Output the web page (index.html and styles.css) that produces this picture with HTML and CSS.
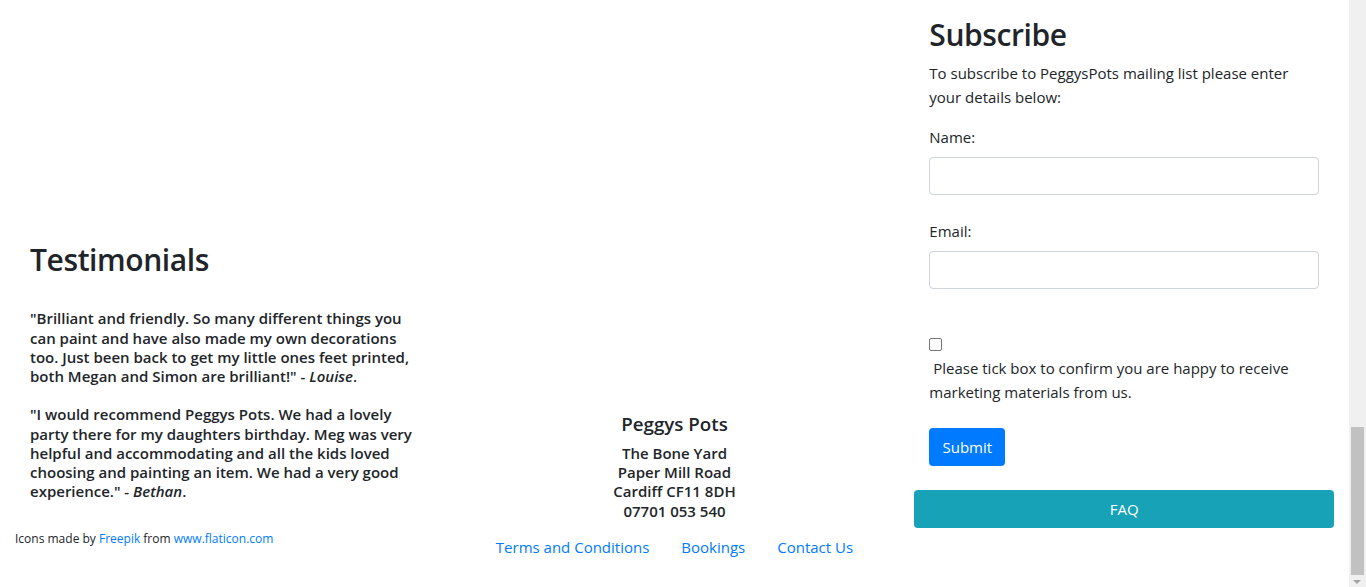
FILE: index.html
```html
<!DOCTYPE html>
<html lang="en">
<head>
<meta charset="utf-8">
<title>Peggys Pots</title>
<link rel="stylesheet" href="styles.css">
</head>
<body>
<div class="viewport">
  <main class="footer-row">
    <section class="col col-testimonials">
      <div class="testimonials">
        <h2 class="heading">Testimonials</h2>
        <h6 class="quote">"Brilliant and friendly. So many different things you can paint and have also made my own decorations too. Just been back to get my little ones feet printed, both Megan and Simon are brilliant!" - <em>Louise</em>.<br><br>"I would recommend Peggys Pots. We had a lovely party there for my daughters birthday. Meg was very helpful and accommodating and all the kids loved choosing and painting an item. We had a very good experience." - <em>Bethan</em>.</h6>
      </div>
      <div class="credits">Icons made by <a href="#">Freepik</a> from <a href="#" class="visited">www.flaticon.com</a></div>
    </section>

    <section class="col col-contact">
      <h5 class="brand">Peggys Pots</h5>
      <h6 class="address">The Bone Yard<br>Paper Mill Road<br>Cardiff CF11 8DH<br>07701 053 540</h6>
      <nav class="links">
        <a href="#">Terms and Conditions</a>
        <a href="#">Bookings</a>
        <a href="#">Contact Us</a>
      </nav>
    </section>

    <section class="col col-subscribe">
      <form class="subscribe">
        <h2 class="heading heading-sub">Subscribe</h2>
        <p class="intro">To subscribe to PeggysPots mailing list please enter your details below:</p>
        <div class="field field-name">
          <label class="label" for="name">Name:</label>
          <input class="control" id="name" type="text">
        </div>
        <div class="field field-email">
          <label class="label" for="email">Email:</label>
          <input class="control" id="email" type="email">
        </div>
        <div class="consent">
          <input class="check" type="checkbox" id="consent"><br>
          <label for="consent" class="consent-text">&nbsp;Please tick box to confirm you are happy to receive marketing materials from us.</label>
        </div>
        <button type="button" class="btn btn-primary">Submit</button>
      </form>
      <a href="#" class="btn btn-info">FAQ</a>
    </section>
  </main>
  <div class="scrollbar">
    <div class="thumb"></div>
    <div class="arrow"></div>
  </div>
</div>
</body>
</html>
```

FILE: styles.css
```css
* {
  box-sizing: border-box;
}

html,
body {
  margin: 0;
  height: 100%;
}

body {
  font-family: "Open Sans", "Noto Sans", sans-serif;
  font-size: 15px;
  line-height: 24px;
  color: #212529;
  background: #fff;
  overflow: hidden;
}

a {
  color: #007bff;
  text-decoration: none;
}

.viewport {
  display: flex;
  height: 587px;
}

.footer-row {
  flex: 1;
  display: grid;
  grid-template-columns: repeat(3, 1fr);
  align-items: start;
}

.col {
  padding: 0 15px;
}

/* Headings */
.heading {
  font-size: 30px;
  line-height: 38.4px;
  font-weight: 600;
  letter-spacing: -0.4px;
  margin: 0 0 30px;
}

/* Left column */
.col-testimonials {
  padding-top: 241px;
}

.testimonials {
  padding: 0 15px;
}

.quote {
  font-size: 15px;
  line-height: 19.2px;
  font-weight: 600;
  margin: 0;
}

.quote em {
  font-style: italic;
}

.credits {
  margin-top: 27px;
  font-size: 12px;
  line-height: 21px;
}

/* Middle column */
.col-contact {
  padding-top: 412px;
  text-align: center;
}

.brand {
  font-size: 18.75px;
  line-height: 24px;
  font-weight: 600;
  margin: 0 0 8px;
}

.address {
  font-size: 15px;
  line-height: 19.2px;
  font-weight: 600;
  margin: 0 0 8px;
}

.links {
  display: flex;
  justify-content: center;
}

.links a {
  padding: 6px 16px 10px;
  line-height: 24px;
}

/* Right column */
.col-subscribe {
  padding-top: 16px;
}

.subscribe {
  padding: 0 15px;
}

.heading-sub {
  margin-bottom: 7px;
}

.intro {
  margin: 0 0 16px;
}

.field {
  display: flex;
  flex-direction: column;
  align-items: flex-start;
}

.field-name {
  margin-bottom: 24px;
}

.field-email {
  margin-bottom: 43px;
}

.label {
  margin-bottom: 8px;
  line-height: 24px;
}

.control {
  display: block;
  width: 100%;
  height: 38px;
  padding: 6px 12px;
  font: inherit;
  border: 1px solid #ced4da;
  border-radius: 4px;
  background: #fff;
}

.consent {
  line-height: 24px;
}

.check {
  appearance: none;
  -webkit-appearance: none;
  width: 13px;
  height: 13px;
  margin: 0;
  border: 1px solid #767676;
  border-radius: 2px;
  background: #fff;
  vertical-align: -1px;
}

.btn {
  display: block;
  height: 38px;
  padding: 0 12px;
  font: inherit;
  line-height: 38px;
  text-align: center;
  color: #fff;
  border: 0;
  border-radius: 4px;
}

.btn-primary {
  margin-top: 24px;
  background: #007bff;
  width: 76px;
}

.btn-info {
  margin-top: 24px;
  background: #17a2b8;
  width: 100%;
}

/* Fake browser scrollbar */
.scrollbar {
  width: 17px;
  background: #f0f0f0;
  display: flex;
  flex-direction: column;
  justify-content: flex-end;
  align-items: center;
}

.thumb {
  width: 13px;
  height: 148px;
  background: #c1c1c1;
}

.arrow {
  width: 17px;
  height: 12px;
  position: relative;
}

.arrow::after {
  content: "";
  position: absolute;
  left: 4px;
  top: 5px;
  border-left: 4px solid transparent;
  border-right: 4px solid transparent;
  border-top: 4px solid #a3a3a3;
}
```
